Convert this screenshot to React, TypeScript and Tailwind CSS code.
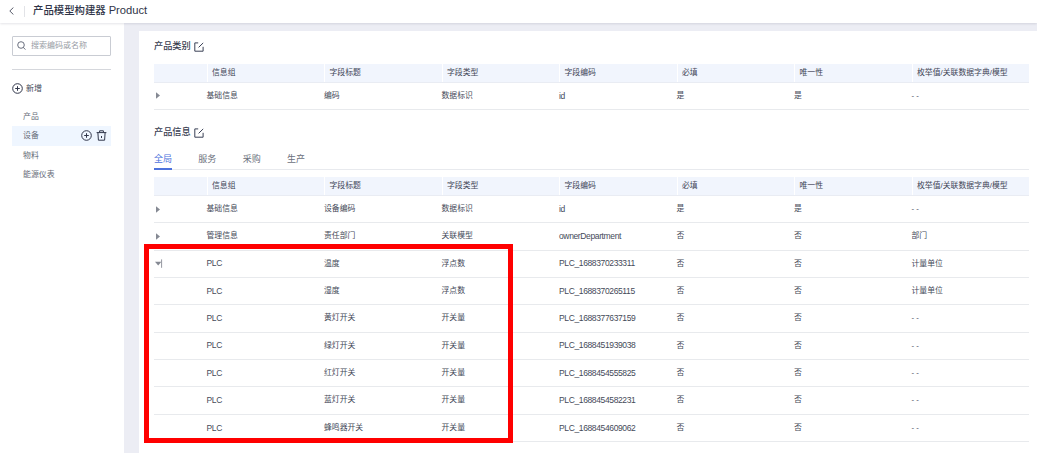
import { clsx } from "clsx"

type Row = {
  group: string
  title: string
  type: string
  code: string
  required: string
  unique: string
  ref: string
  toggle?: "closed" | "open"
}

const columns = ["信息组", "字段标题", "字段类型", "字段编码", "必填", "唯一性", "枚举值/关联数据字典/模型"]

const categoryRows: Row[] = [
  { group: "基础信息", title: "编码", type: "数据标识", code: "id", required: "是", unique: "是", ref: "- -", toggle: "closed" },
]

const infoRows: Row[] = [
  { group: "基础信息", title: "设备编码", type: "数据标识", code: "id", required: "是", unique: "是", ref: "- -", toggle: "closed" },
  { group: "管理信息", title: "责任部门", type: "关联模型", code: "ownerDepartment", required: "否", unique: "否", ref: "部门", toggle: "closed" },
  { group: "PLC", title: "温度", type: "浮点数", code: "PLC_1688370233311", required: "否", unique: "否", ref: "计量单位", toggle: "open" },
  { group: "PLC", title: "湿度", type: "浮点数", code: "PLC_1688370265115", required: "否", unique: "否", ref: "计量单位" },
  { group: "PLC", title: "黄灯开关", type: "开关量", code: "PLC_1688377637159", required: "否", unique: "否", ref: "- -" },
  { group: "PLC", title: "绿灯开关", type: "开关量", code: "PLC_1688451939038", required: "否", unique: "否", ref: "- -" },
  { group: "PLC", title: "红灯开关", type: "开关量", code: "PLC_1688454555825", required: "否", unique: "否", ref: "- -" },
  { group: "PLC", title: "蓝灯开关", type: "开关量", code: "PLC_1688454582231", required: "否", unique: "否", ref: "- -" },
  { group: "PLC", title: "蜂鸣器开关", type: "开关量", code: "PLC_1688454609062", required: "否", unique: "否", ref: "- -" },
]

const menu = ["产品", "设备", "物料", "能源仪表"]
const tabs = ["全局", "服务", "采购", "生产"]

const PlusCircle = () => (
  <svg className="size-[11px] shrink-0" viewBox="0 0 11 11" fill="none" stroke="#30364a" strokeWidth="1">
    <circle cx="5.5" cy="5.5" r="4.8" />
    <path d="M5.5 3.2v4.6M3.2 5.5h4.6" />
  </svg>
)

const Trash = () => (
  <svg className="size-[11px] shrink-0" viewBox="0 0 11 11" fill="none" stroke="#30364a" strokeWidth="1">
    <path d="M0.6 2.6h9.8M3.6 2.4V0.8h3.8v1.6M1.9 2.8l.5 7.4h6.2l.5-7.4M5.5 6v2" />
  </svg>
)

const EditIcon = () => (
  <svg className="size-[10px] shrink-0" viewBox="0 0 10 10" fill="none" stroke="#3a4056" strokeWidth="1">
    <path d="M4.2 0.9H0.8v8.3h8.3V4.8M4.6 5.4L9.2 0.9" />
  </svg>
)

const Toggle = ({ state }: { state?: "closed" | "open" }) => {
  if (state === "closed") {
    return (
      <svg className="ml-[2px] h-[7px] w-[4px]" viewBox="0 0 4 7">
        <path d="M0 0.3L4 3.5L0 6.7z" fill="#858993" />
      </svg>
    )
  }
  if (state === "open") {
    return (
      <svg className="ml-[1px] h-[9px] w-[8px]" viewBox="0 0 8 9">
        <path d="M0 2.8h6.4L3.2 6.4z" fill="#858993" />
        <path d="M6.6 0.4v8.4" stroke="#777b85" strokeWidth="0.8" />
      </svg>
    )
  }
  return null
}

const SectionTitle = ({ children }: { children: string }) => (
  <div className="flex h-[14px] items-center gap-[3px] text-[9.2px] font-medium text-[#373c4f]">
    <span>{children}</span>
    <EditIcon />
  </div>
)

const FieldTable = ({ rows }: { rows: Row[] }) => (
  <div className="w-[875px] text-[7.85px] text-[#454a59]">
    <div className="grid h-[18.6px] grid-cols-[52.5px_repeat(7,117.5px)] border-b border-[#e9ecf3] bg-[#f1f5fd]">
      <div />
      {columns.map((name) => (
        <div key={name} className="flex items-center whitespace-nowrap border-l border-white pl-[4.5px] text-[#3f4557]">
          {name}
        </div>
      ))}
    </div>
    {rows.map((row) => (
      <div
        key={row.title}
        className="grid h-[27.35px] grid-cols-[52.5px_repeat(7,117.5px)] items-center whitespace-nowrap border-b border-[#e8eaed]"
      >
        <Toggle state={row.toggle} />
        <span className={clsx("col-start-2", row.group === "PLC" && "text-[8.5px] tracking-[-0.3px]")}>{row.group}</span>
        <span>{row.title}</span>
        <span>{row.type}</span>
        <span className="text-[8.5px] tracking-[-0.37px]">{row.code}</span>
        <span>{row.required}</span>
        <span>{row.unique}</span>
        <span>{row.ref}</span>
      </div>
    ))}
  </div>
)

const Sidebar = () => (
  <aside className="w-[124px] shrink-0 bg-white px-[11.5px] pt-[13px]">
    <div className="flex h-[19.5px] w-[99.5px] items-center gap-[5px] rounded-[1px] border border-[#c9ccd3] pl-[4.5px] text-[8px] text-[#999da5]">
      <svg className="size-[9px]" viewBox="0 0 9 9" fill="none" stroke="#596070" strokeWidth="0.9">
        <circle cx="4" cy="4" r="3.3" />
        <path d="M6.3 6.4L8.4 8.6" />
      </svg>
      <span>搜索编码或名称</span>
    </div>
    <div className="mt-[13.5px] w-[99.5px] border-t border-[#d5d7dc]" />
    <div className="mt-[13px] flex h-[11px] items-center gap-[3.5px] text-[8px] text-[#454a59]">
      <PlusCircle />
      <span>新增</span>
    </div>
    <ul className="mt-[12.5px] w-[99.5px] text-[7.9px] text-[#666b78]">
      {menu.map((name) => (
        <li
          key={name}
          className={clsx("flex h-[19.5px] items-center justify-between pl-[11.5px] pr-[4.5px]", name === "设备" && "bg-[#eff6ff]")}
        >
          <span className="pt-px">{name}</span>
          {name === "设备" && (
            <span className="flex gap-[4px]">
              <PlusCircle />
              <Trash />
            </span>
          )}
        </li>
      ))}
    </ul>
  </aside>
)

export default function App() {
  return (
    <div className="relative flex h-[453px] w-[1037px] flex-col overflow-hidden bg-[#ecedf4] font-['Liberation_Sans','Noto_Sans_CJK_SC',sans-serif] leading-none">
      <header className="z-10 flex h-[23px] shrink-0 items-center bg-white pb-px shadow-[0_1px_2px_rgba(40,45,70,0.12)]">
        <svg className="ml-[9px] h-[8px] w-[5px]" viewBox="0 0 5 8" fill="none" stroke="#454a59" strokeWidth="0.9">
          <path d="M4.4 0.5L0.8 4L4.4 7.5" />
        </svg>
        <div className="ml-[9.5px] h-[11px] border-l border-[#e2e3e7]" />
        <h1 className="ml-[8.5px] whitespace-nowrap text-[10.4px] font-medium text-[#303548]">
          产品模型构建器 <span className="text-[11.2px]">Product</span>
        </h1>
      </header>
      <div className="flex min-h-0 flex-1">
        <Sidebar />
        <main className="ml-[15px] mt-[8px] flex-1 bg-white pl-[15px] pt-[9px]">
          <SectionTitle>产品类别</SectionTitle>
          <div className="mt-[10px]">
            <FieldTable rows={categoryRows} />
          </div>
          <div className="mt-[16px]">
            <SectionTitle>产品信息</SectionTitle>
          </div>
          <div className="mt-[11px] flex h-[19px] w-[875px] gap-[26.3px] border-b border-[#e8eaee] text-[9px] text-[#6b707c]">
            {tabs.map((tab) => (
              <div
                key={tab}
                className={clsx(
                  "box-content flex h-[16px] items-center border-b-2 pt-px",
                  tab === "全局" ? "border-[#4d72dc] text-[#4d72dc]" : "border-transparent"
                )}
              >
                {tab}
              </div>
            ))}
          </div>
          <div className="mt-[7.3px]">
            <FieldTable rows={infoRows} />
          </div>
        </main>
      </div>
      {/* highlight around the PLC fields */}
      <div className="absolute left-[143.5px] top-[244px] z-20 h-[198.5px] w-[369px] border-[5px] border-[#ff0000]" />
    </div>
  )
}
